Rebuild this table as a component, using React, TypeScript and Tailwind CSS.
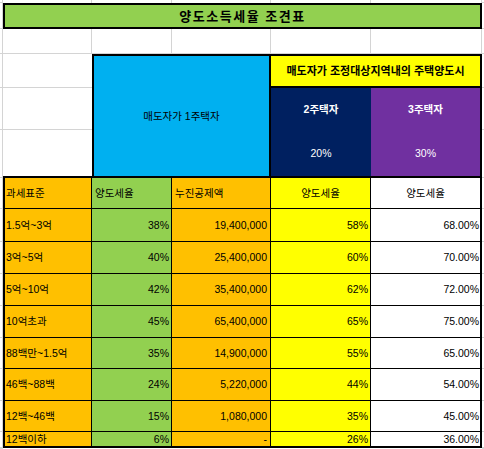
import React from 'react';

const rows = [
  { r: 'row-start-8', label: '1.5억~3억', rate: '38%', ded: '19,400,000', two: '58%', three: '68.00%' },
  { r: 'row-start-9', label: '3억~5억', rate: '40%', ded: '25,400,000', two: '60%', three: '70.00%' },
  { r: 'row-start-10', label: '5억~10억', rate: '42%', ded: '35,400,000', two: '62%', three: '72.00%' },
  { r: 'row-start-11', label: '10억초과', rate: '45%', ded: '65,400,000', two: '65%', three: '75.00%' },
  { r: 'row-start-12', label: '88백만~1.5억', rate: '35%', ded: '14,900,000', two: '55%', three: '65.00%' },
  { r: 'row-start-13', label: '46백~88백', rate: '24%', ded: '5,220,000', two: '44%', three: '54.00%' },
  { r: 'row-start-14', label: '12백~46백', rate: '15%', ded: '1,080,000', two: '35%', three: '45.00%' },
  { r: 'row-start-15', label: '12백이하', rate: '6%', ded: '-', two: '26%', three: '36.00%', last: true },
];

const allRows = [
  'row-start-1', 'row-start-2', 'row-start-3', 'row-start-4', 'row-start-5', 'row-start-6', 'row-start-7', 'row-start-8',
  'row-start-9', 'row-start-10', 'row-start-11', 'row-start-12', 'row-start-13', 'row-start-14', 'row-start-15', 'row-start-16',
];

const blankCols = ['col-start-2', 'col-start-3', 'col-start-4', 'col-start-5', 'col-start-6'];

export default function App() {
  return (
    <div
      className="w-[484px] h-[449px] overflow-hidden bg-white text-black text-[10.5px] leading-none grid grid-cols-[3px_89px_80px_99px_100px_111px_2px] grid-rows-[3px_26px_25px_34px_42px_48px_31px_33px_32px_32px_32px_31px_32px_31px_16px_1px]"
      style={{ fontFamily: '"Liberation Sans", "Noto Sans CJK KR", sans-serif' }}
    >
      {/* sheet gridlines outside the table */}
      {allRows.map((r) => (
        <div key={'a' + r} className={`col-start-1 ${r} border-r border-b border-[#d4d4d4]`} />
      ))}
      {allRows.map((r) => (
        <div key={'g' + r} className={`col-start-7 ${r} border-b border-[#d4d4d4]`} />
      ))}
      {blankCols.map((c) => (
        <div key={'t' + c} className={`${c} row-start-1 border-r border-[#d4d4d4]`} />
      ))}
      {blankCols.map((c) => (
        <div key={'s' + c} className={`${c} row-start-3 border-r border-b border-[#d4d4d4]`} />
      ))}
      <div className="col-start-2 row-start-4 border-b border-[#d4d4d4]" />
      <div className="col-start-2 row-start-5 border-b border-[#d4d4d4]" />
      <div className="col-start-2 row-start-6 border-b-2 border-b-black" />

      {/* title */}
      <div className="col-start-2 col-span-5 row-start-2 bg-[#92d050] border-2 border-black flex items-center justify-center font-bold text-[13px] tracking-[1.5px]">
        양도소득세율 조견표
      </div>

      {/* group headers */}
      <div className="col-start-3 col-span-2 row-start-4 row-span-3 bg-[#00b0f0] border-2 border-black flex items-center justify-center">
        매도자가 1주택자
      </div>
      <div className="col-start-5 col-span-2 row-start-4 bg-[#ffff00] border-t-2 border-r-2 border-b-2 border-black flex items-center justify-center font-bold text-[11px]">
        매도자가 조정대상지역내의 주택양도시
      </div>
      <div className="col-start-5 row-start-5 bg-[#002060] text-white font-bold flex items-center justify-center">
        2주택자
      </div>
      <div className="col-start-6 row-start-5 bg-[#7030a0] text-white font-bold border-r-2 border-black flex items-center justify-center">
        3주택자
      </div>
      <div className="col-start-5 row-start-6 bg-[#002060] text-white border-b-2 border-black flex items-center justify-center">
        20%
      </div>
      <div className="col-start-6 row-start-6 bg-[#7030a0] text-white border-r-2 border-b-2 border-black flex items-center justify-center">
        30%
      </div>

      {/* column headers */}
      <div className="col-start-2 row-start-7 bg-[#ffc000] border-l-2 border-r border-b border-black flex items-center pl-px">과세표준</div>
      <div className="col-start-3 row-start-7 bg-[#92d050] border-r border-b border-black flex items-center pl-[3px]">양도세율</div>
      <div className="col-start-4 row-start-7 bg-[#ffc000] border-r border-b border-black flex items-center pl-[3px]">누진공제액</div>
      <div className="col-start-5 row-start-7 bg-[#ffff00] border-r border-b border-black flex items-center justify-center">양도세율</div>
      <div className="col-start-6 row-start-7 bg-white border-r-2 border-b border-black flex items-center justify-center">양도세율</div>

      {/* data */}
      {rows.map((row) => {
        const b = row.last ? 'border-b-2' : 'border-b';
        return (
          <React.Fragment key={row.r}>
            <div className={`col-start-2 ${row.r} ${b} bg-[#ffc000] border-l-2 border-r border-black flex items-center pl-px`}>{row.label}</div>
            <div className={`col-start-3 ${row.r} ${b} bg-[#92d050] border-r border-black flex items-center justify-end pr-[2px]`}>{row.rate}</div>
            <div className={`col-start-4 ${row.r} ${b} bg-[#ffc000] border-r border-black flex items-center justify-end pr-[3px]`}>{row.ded}</div>
            <div className={`col-start-5 ${row.r} ${b} bg-[#ffff00] border-r border-black flex items-center justify-end pr-[2px]`}>{row.two}</div>
            <div className={`col-start-6 ${row.r} ${b} bg-white border-r-2 border-black flex items-center justify-end pr-px`}>{row.three}</div>
          </React.Fragment>
        );
      })}
    </div>
  );
}
